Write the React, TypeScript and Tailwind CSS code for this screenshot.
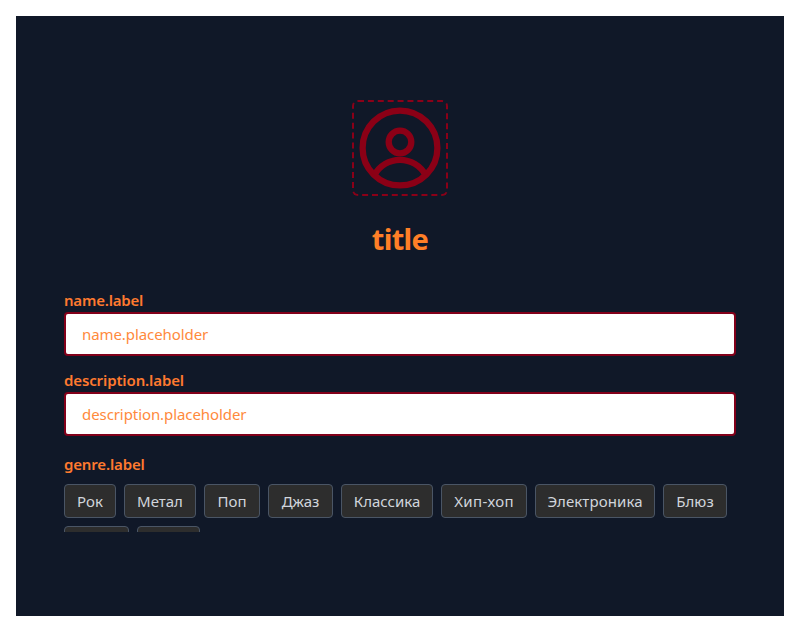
const genres = [
  { name: 'Рок', size: 'w-[52px]' },
  { name: 'Метал', size: 'w-[72px]' },
  { name: 'Поп', size: 'w-[56px]' },
  { name: 'Джаз', size: 'w-[65px]' },
  { name: 'Классика', size: 'w-[92px]' },
  { name: 'Хип-хоп', size: 'w-[86px] tracking-[0.35px]' },
  { name: 'Электроника', size: 'w-[120px] tracking-[0.1px]' },
  { name: 'Блюз', size: 'w-[64px] tracking-[0.1px]' },
  { name: '', size: 'w-[65px]' },
  { name: '', size: 'w-[63px]' },
];

function Avatar() {
  return (
    <div className="h-24 w-24 rounded-md border-2 border-dashed border-[#8b0018]">
      <svg viewBox="0 0 92 92" fill="none" stroke="#8b0016" strokeWidth="6.3" className="h-full w-full">
        <circle cx="46" cy="46" r="37.4" />
        <circle cx="46" cy="40" r="11.3" />
        <path d="M20.5 73 A29 29 0 0 1 71.5 73" />
      </svg>
    </div>
  );
}

function Field({ label, placeholder, spacing }: { label: string; placeholder: string; spacing: string }) {
  return (
    <div className="h-20">
      <label className={'block h-6 text-[15px] leading-6 font-semibold text-[#ff7a2f] ' + spacing}>{label}</label>
      <input
        placeholder={placeholder}
        className="block h-11 w-full rounded border-2 border-[#82001a] bg-white px-4 text-[15px] leading-6 tracking-[-0.08px] placeholder:text-[#ff8a3c]"
      />
    </div>
  );
}

export default function App() {
  return (
    <div className="h-[632px] bg-white p-4 font-['Noto_Sans','Open_Sans',sans-serif]">
      <main className="flex h-[600px] flex-col items-center bg-[#101828] px-12 pt-[84px]">
        <Avatar />
        <h1 className="mt-[25px] h-9 text-[29px] leading-9 font-bold tracking-[-0.7px] text-[#ff7f27]">title</h1>
        <form className="mt-[31px] h-[244px] w-full overflow-hidden">
          <Field label="name.label" placeholder="name.placeholder" spacing="tracking-[-0.2px]" />
          <Field label="description.label" placeholder="description.placeholder" spacing="tracking-[-0.12px]" />
          <div className="pt-1">
            <div className="h-6 text-[15px] leading-6 font-semibold tracking-[-0.15px] text-[#ff7a2f]">genre.label</div>
            <div className="mt-2 flex flex-wrap gap-2">
              {genres.map((g, i) => (
                <button
                  key={i}
                  type="button"
                  className={'h-[34px] shrink-0 rounded border border-[#4a5565] bg-[#2d2d2d] text-[15px] leading-6 whitespace-nowrap text-[#d1d5dc] ' + g.size}
                >
                  {g.name}
                </button>
              ))}
            </div>
          </div>
        </form>
      </main>
    </div>
  );
}
